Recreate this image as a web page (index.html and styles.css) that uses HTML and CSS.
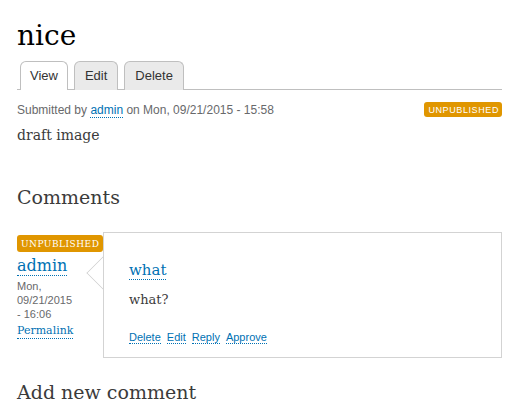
FILE: index.html
```html
<!DOCTYPE html>
<html lang="en">

<head>
    <meta charset="UTF-8">
    <meta name="viewport" content="width=device-width, initial-scale=1.0">
    <title>nice</title>
    <link rel="stylesheet" href="styles.css">
</head>

<body>
    <div class="main">
        <h1 class="title">nice</h1>
        <ul class="tabs">
            <li class="tab active"><a href="#">View</a></li>
            <li class="tab"><a href="#">Edit</a></li>
            <li class="tab"><a href="#">Delete</a></li>
        </ul>
        <div class="meta">
            <span>Submitted by <a href="#" class="link">admin</a> on Mon, 09/21/2015 - 15:58</span>
            <span class="badge">Unpublished</span>
        </div>
        <p class="body">draft image</p>

        <h2 class="section">Comments</h2>
        <div class="comment">
            <div class="col-left">
                <span class="badge serif">Unpublished</span>
                <a href="#" class="link author">admin</a>
                <div class="date">Mon,<br>09/21/2015<br>- 16:06</div>
                <a href="#" class="link permalink">Permalink</a>
            </div>
            <div class="comment-box">
                <span class="arrow"></span>
                <a href="#" class="link comment-title">what</a>
                <p class="comment-text">what?</p>
                <div class="links">
                    <a href="#" class="link">Delete</a>
                    <a href="#" class="link">Edit</a>
                    <a href="#" class="link">Reply</a>
                    <a href="#" class="link">Approve</a>
                </div>
            </div>
        </div>

        <h2 class="section add">Add new comment</h2>
    </div>
</body>

</html>
```

FILE: styles.css
```css
body {
    margin: 0;
    background-color: #fff;
    color: #3b3b3b;
    font-family: "DejaVu Serif", Georgia, serif;
}

.main {
    width: 485px;
    padding-left: 17px;
}

.title {
    font-size: 28px;
    font-weight: normal;
    color: #000;
    margin: 0;
    padding-top: 19px;
    line-height: 34px;
}

.tabs {
    list-style: none;
    margin: 8px 0 0 0;
    padding: 0 0 0 3px;
    display: flex;
    border-bottom: 1px solid #bfbfbf;
    font-family: "Liberation Sans", Arial, sans-serif;
    font-size: 13px;
}

.tab {
    margin-right: 6px;
    margin-bottom: -1px;
    border: 1px solid #bfbfbf;
    border-bottom: none;
    border-radius: 6px 6px 0 0;
    background-color: #eaeaea;
}

.tab a {
    display: block;
    padding: 6px 10px 6px;
    line-height: 15px;
    color: #333;
    text-decoration: none;
}

.tab.active a {
    padding: 6px 9px 6px;
}

.tab.active {
    background-color: #fff;
    padding-bottom: 1px;
}

.link {
    color: #0071b3;
    text-decoration: none;
    border-bottom: 1px dotted #0071b3;
}

.meta {
    display: flex;
    justify-content: space-between;
    align-items: center;
    margin-top: 12px;
    font-family: "Liberation Sans", Arial, sans-serif;
    font-size: 12px;
    color: #68696b;
}

.badge {
    background-color: #e09600;
    color: #fff;
    border-radius: 3px;
    font-size: 9px;
    letter-spacing: 0.6px;
    text-transform: uppercase;
    padding: 2px 3px 1px 4px;
    line-height: 12px;
}

.badge.serif {
    font-family: "DejaVu Serif", Georgia, serif;
    font-size: 9px;
    letter-spacing: 0.5px;
    padding: 3px 4px 2px;
}

.body {
    font-size: 14px;
    margin: 10px 0 0 0;
}

.section {
    font-size: 19px;
    font-weight: normal;
    margin: 41px 0 0 0;
    line-height: 26px;
}

.section.add {
    margin-top: 21px;
}

.comment {
    display: flex;
    margin-top: 22px;
}

.col-left {
    width: 86px;
    display: flex;
    flex-direction: column;
    align-items: flex-start;
    margin-top: 3px;
}

.author {
    font-size: 16px;
    margin-top: 5px;
    line-height: 18px;
}

.date {
    font-family: "Liberation Sans", Arial, sans-serif;
    font-size: 11px;
    line-height: 14px;
    color: #68696b;
    margin-top: 3px;
}

.permalink {
    font-size: 11px;
    margin-top: 3px;
    line-height: 14px;
}

.comment-box {
    position: relative;
    flex: 1;
    border: 1px solid #d3d3d3;
    padding: 27px 25px 13px;
}

.arrow {
    position: absolute;
    left: -13px;
    top: 28px;
    width: 24px;
    height: 24px;
    background: #fff;
    border-left: 1px solid #d3d3d3;
    border-bottom: 1px solid #d3d3d3;
    box-sizing: border-box;
    transform: rotate(45deg);
    clip-path: polygon(0 0, 0 100%, 100% 100%);
}

.comment-title {
    font-size: 15px;
    line-height: 20px;
}

.comment-text {
    font-size: 13px;
    margin: 12px 0 0 0;
}

.links {
    margin-top: 24px;
    font-family: "Liberation Sans", Arial, sans-serif;
    font-size: 11px;
    display: flex;
    gap: 6px;
}
```
